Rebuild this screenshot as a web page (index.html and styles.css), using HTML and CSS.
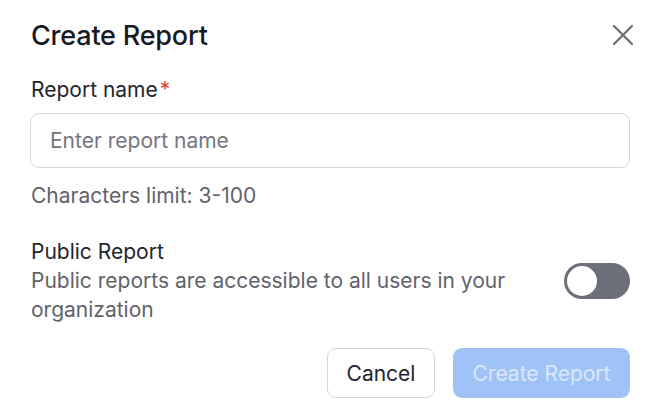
FILE: index.html
```html
<!DOCTYPE html>
<html>
<head>
<meta charset="utf-8">
<link rel="stylesheet" href="styles.css">
</head>
<body>
<div class="dialog">
  <div class="header">
    <h1 class="title">Create Report</h1>
    <button class="close" aria-label="Close">
      <svg width="22" height="22" viewBox="0 0 22 22"><path d="M2 2 L20 20 M20 2 L2 20" stroke="#6b6d75" stroke-width="2.2" stroke-linecap="round" fill="none"/></svg>
    </button>
  </div>
  <label class="label">Report name<span class="req">*</span></label>
  <input class="input" type="text" placeholder="Enter report name">
  <div class="hint">Characters limit: 3-100</div>
  <div class="public">
    <div class="public-text">
      <div class="public-title">Public Report</div>
      <div class="public-desc">Public reports are accessible to all users in your organization</div>
    </div>
    <div class="toggle"><div class="knob"></div></div>
  </div>
  <div class="actions">
    <button class="btn cancel">Cancel</button>
    <button class="btn primary">Create Report</button>
  </div>
</div>
</body>
</html>
```
FILE: styles.css
```css
html, body {
  margin: 0;
  padding: 0;
  background: #ffffff;
}
body {
  font-family: Inter, "Noto Sans", sans-serif;
  color: #1f2130;
}
.dialog {
  width: 660px;
  height: 412px;
  box-sizing: border-box;
  padding: 16px 30px 0 31px;
  display: flex;
  flex-direction: column;
}
.header {
  display: flex;
  justify-content: space-between;
  align-items: center;
  height: 38px;
}
.title {
  margin: 0;
  font-size: 27px;
  font-weight: 500;
  color: #171a26;
  letter-spacing: -0.2px;
}
.close {
  border: 0;
  background: none;
  padding: 0;
  margin-right: -5px;
  width: 24px;
  height: 24px;
  display: flex;
  align-items: center;
  justify-content: center;
}
.label {
  margin-top: 23px;
  font-size: 21px;
  font-weight: 400;
  color: #23252f;
  line-height: 26px;
}
.req {
  color: #e0403a;
  margin-left: 2px;
}
.input {
  margin-top: 10px;
  margin-left: -1px;
  height: 55px;
  box-sizing: border-box;
  border: 1px solid #d6d7db;
  border-radius: 9px;
  padding: 0 19px;
  font-family: Inter, sans-serif;
  font-size: 21px;
  color: #2b2d38;
  outline: none;
}
.input::placeholder {
  color: #74767e;
}
.hint {
  margin-top: 14px;
  font-size: 21px;
  color: #61636b;
  line-height: 28px;
}
.public {
  margin-top: 28px;
  display: flex;
  align-items: center;
  justify-content: space-between;
}
.public-title {
  font-size: 21px;
  font-weight: 400;
  color: #23252f;
  line-height: 28px;
}
.public-desc {
  font-size: 21px;
  color: #61636b;
  line-height: 29px;
  width: 520px;
}
.toggle {
  width: 66px;
  height: 36px;
  border-radius: 18px;
  background: #6c6e7a;
  box-sizing: border-box;
  padding: 3px;
  margin-top: 0;
}
.knob {
  width: 30px;
  height: 30px;
  border-radius: 50%;
  background: #ffffff;
}
.actions {
  margin-top: 24px;
  display: flex;
  justify-content: flex-end;
  gap: 18px;
}
.btn {
  height: 50px;
  border-radius: 9px;
  font-family: Inter, sans-serif;
  font-size: 21px;
  font-weight: 400;
  padding: 0 10px;
}
.cancel {
  width: 108px;
  background: #ffffff;
  border: 1px solid #d6d7db;
  color: #23252f;
}
.primary {
  width: 177px;
  background: #a0c3f7;
  border: 0;
  color: #dbe8fc;
}
```
